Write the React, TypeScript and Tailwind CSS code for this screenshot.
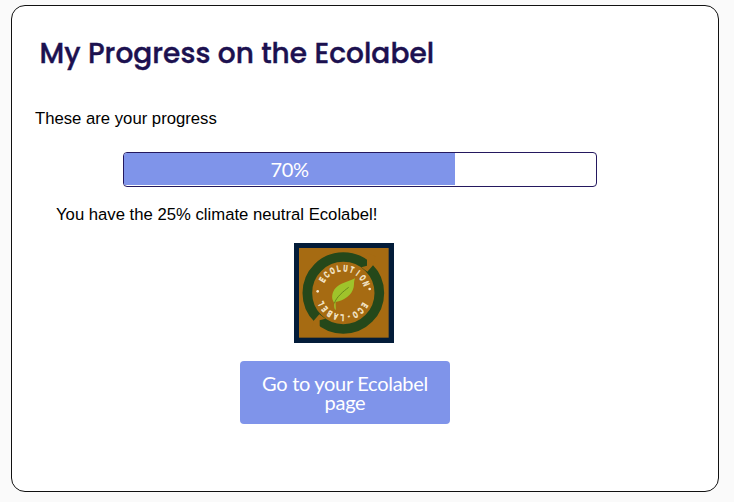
const sealLetters: { char: string; angle: number }[] = [
  ..."ECOLUTION".split("").map((char, i) => ({ char, angle: -58 + i * 15.7 })),
  ..."ECO-LABEL".split("").map((char, i) => ({ char, angle: 120 + i * 15.6 })),
];

function EcolabelBadge() {
  return (
    <svg className="block size-[100px]" viewBox="30 15 300 300" role="img" aria-label="Ecolution Eco-Label">
      <rect x="30" y="15" width="300" height="300" fill="#031c39" />
      <rect x="45" y="30" width="269" height="269" fill="#a66b12" />
      <circle cx="178" cy="165" r="108" fill="none" stroke="#25481a" strokeWidth="29" />
      <path d="M267 82 L250 101 L232 88 L249 83 L249 45 L274 55 Z" fill="#a66b12" />
      <path d="M89 248 L106 229 L124 242 L107 247 L107 285 L82 275 Z" fill="#a66b12" />
      {sealLetters.map(({ char, angle }, i) => (
        <text
          key={i}
          transform={`translate(178 165) rotate(${angle}) translate(0 -65) scale(0.62 1)`}
          textAnchor="middle"
          fill="#f5e8cf"
          stroke="#f5e8cf"
          strokeWidth="1.5"
          className="font-['Liberation_Sans',sans-serif] text-[27px] font-bold"
        >
          {char}
        </text>
      ))}
      <circle cx="101" cy="160" r="4" fill="#f5e8cf" />
      <circle cx="257" cy="153" r="4" fill="#f5e8cf" />
      <path d="M213 121 C188 133 157 137 147 163 C142 178 145 187 151 195 C150 204 150 211 154 216 C157 214 154 204 155 192 C180 188 204 172 209 148 C211 137 209 130 213 121 Z" fill="#9fc32b" />
      <path d="M151 196 C158 176 177 161 194 148" fill="none" stroke="#5d7b18" strokeWidth="2.5" />
    </svg>
  );
}

export default function App() {
  return (
    <main className="h-[502px] w-[734px] bg-[#fafafa] pt-[5px] pl-[11px] font-['Liberation_Sans',Arial,sans-serif] text-black">
      <section className="flex h-[487px] w-[708px] flex-col rounded-[14px] border border-[#111] bg-white">
        <h1 className="mt-[27px] ml-[27.5px] h-[42px] font-[Poppins,Inter,sans-serif] text-[28px] leading-[42px] font-medium tracking-[0.04px] whitespace-nowrap text-[#1c1150] [-webkit-text-stroke:0.4px_#1c1150]">
          My Progress on the Ecolabel
        </h1>
        <p className="mt-[32px] ml-[23px] h-6 text-[16.7px] leading-6">These are your progress</p>
        <div className="mt-[21px] ml-[111px] h-[35px] w-[474px] overflow-hidden rounded-[4px] border border-[#24185f] bg-white">
          <div className="flex h-8 w-[331px] items-center justify-center bg-[#7f94ea] font-[Lato,sans-serif] text-xl leading-8 tracking-[-0.4px] text-white">
            70%
          </div>
        </div>
        <p className="mt-[16px] ml-[44px] h-6 text-[16.72px] leading-6">
          You have the 25% climate neutral Ecolabel!
        </p>
        <div className="mt-[16px] ml-[282px]">
          <EcolabelBadge />
        </div>
        <button className="mt-[18px] ml-[228px] h-[63px] w-[210px] rounded-[4px] bg-[#7f94ea] px-5 pt-px text-center font-[Lato,sans-serif] text-xl leading-[19px] tracking-[-0.3px] text-white">
          Go to your Ecolabel page
        </button>
      </section>
    </main>
  );
}
